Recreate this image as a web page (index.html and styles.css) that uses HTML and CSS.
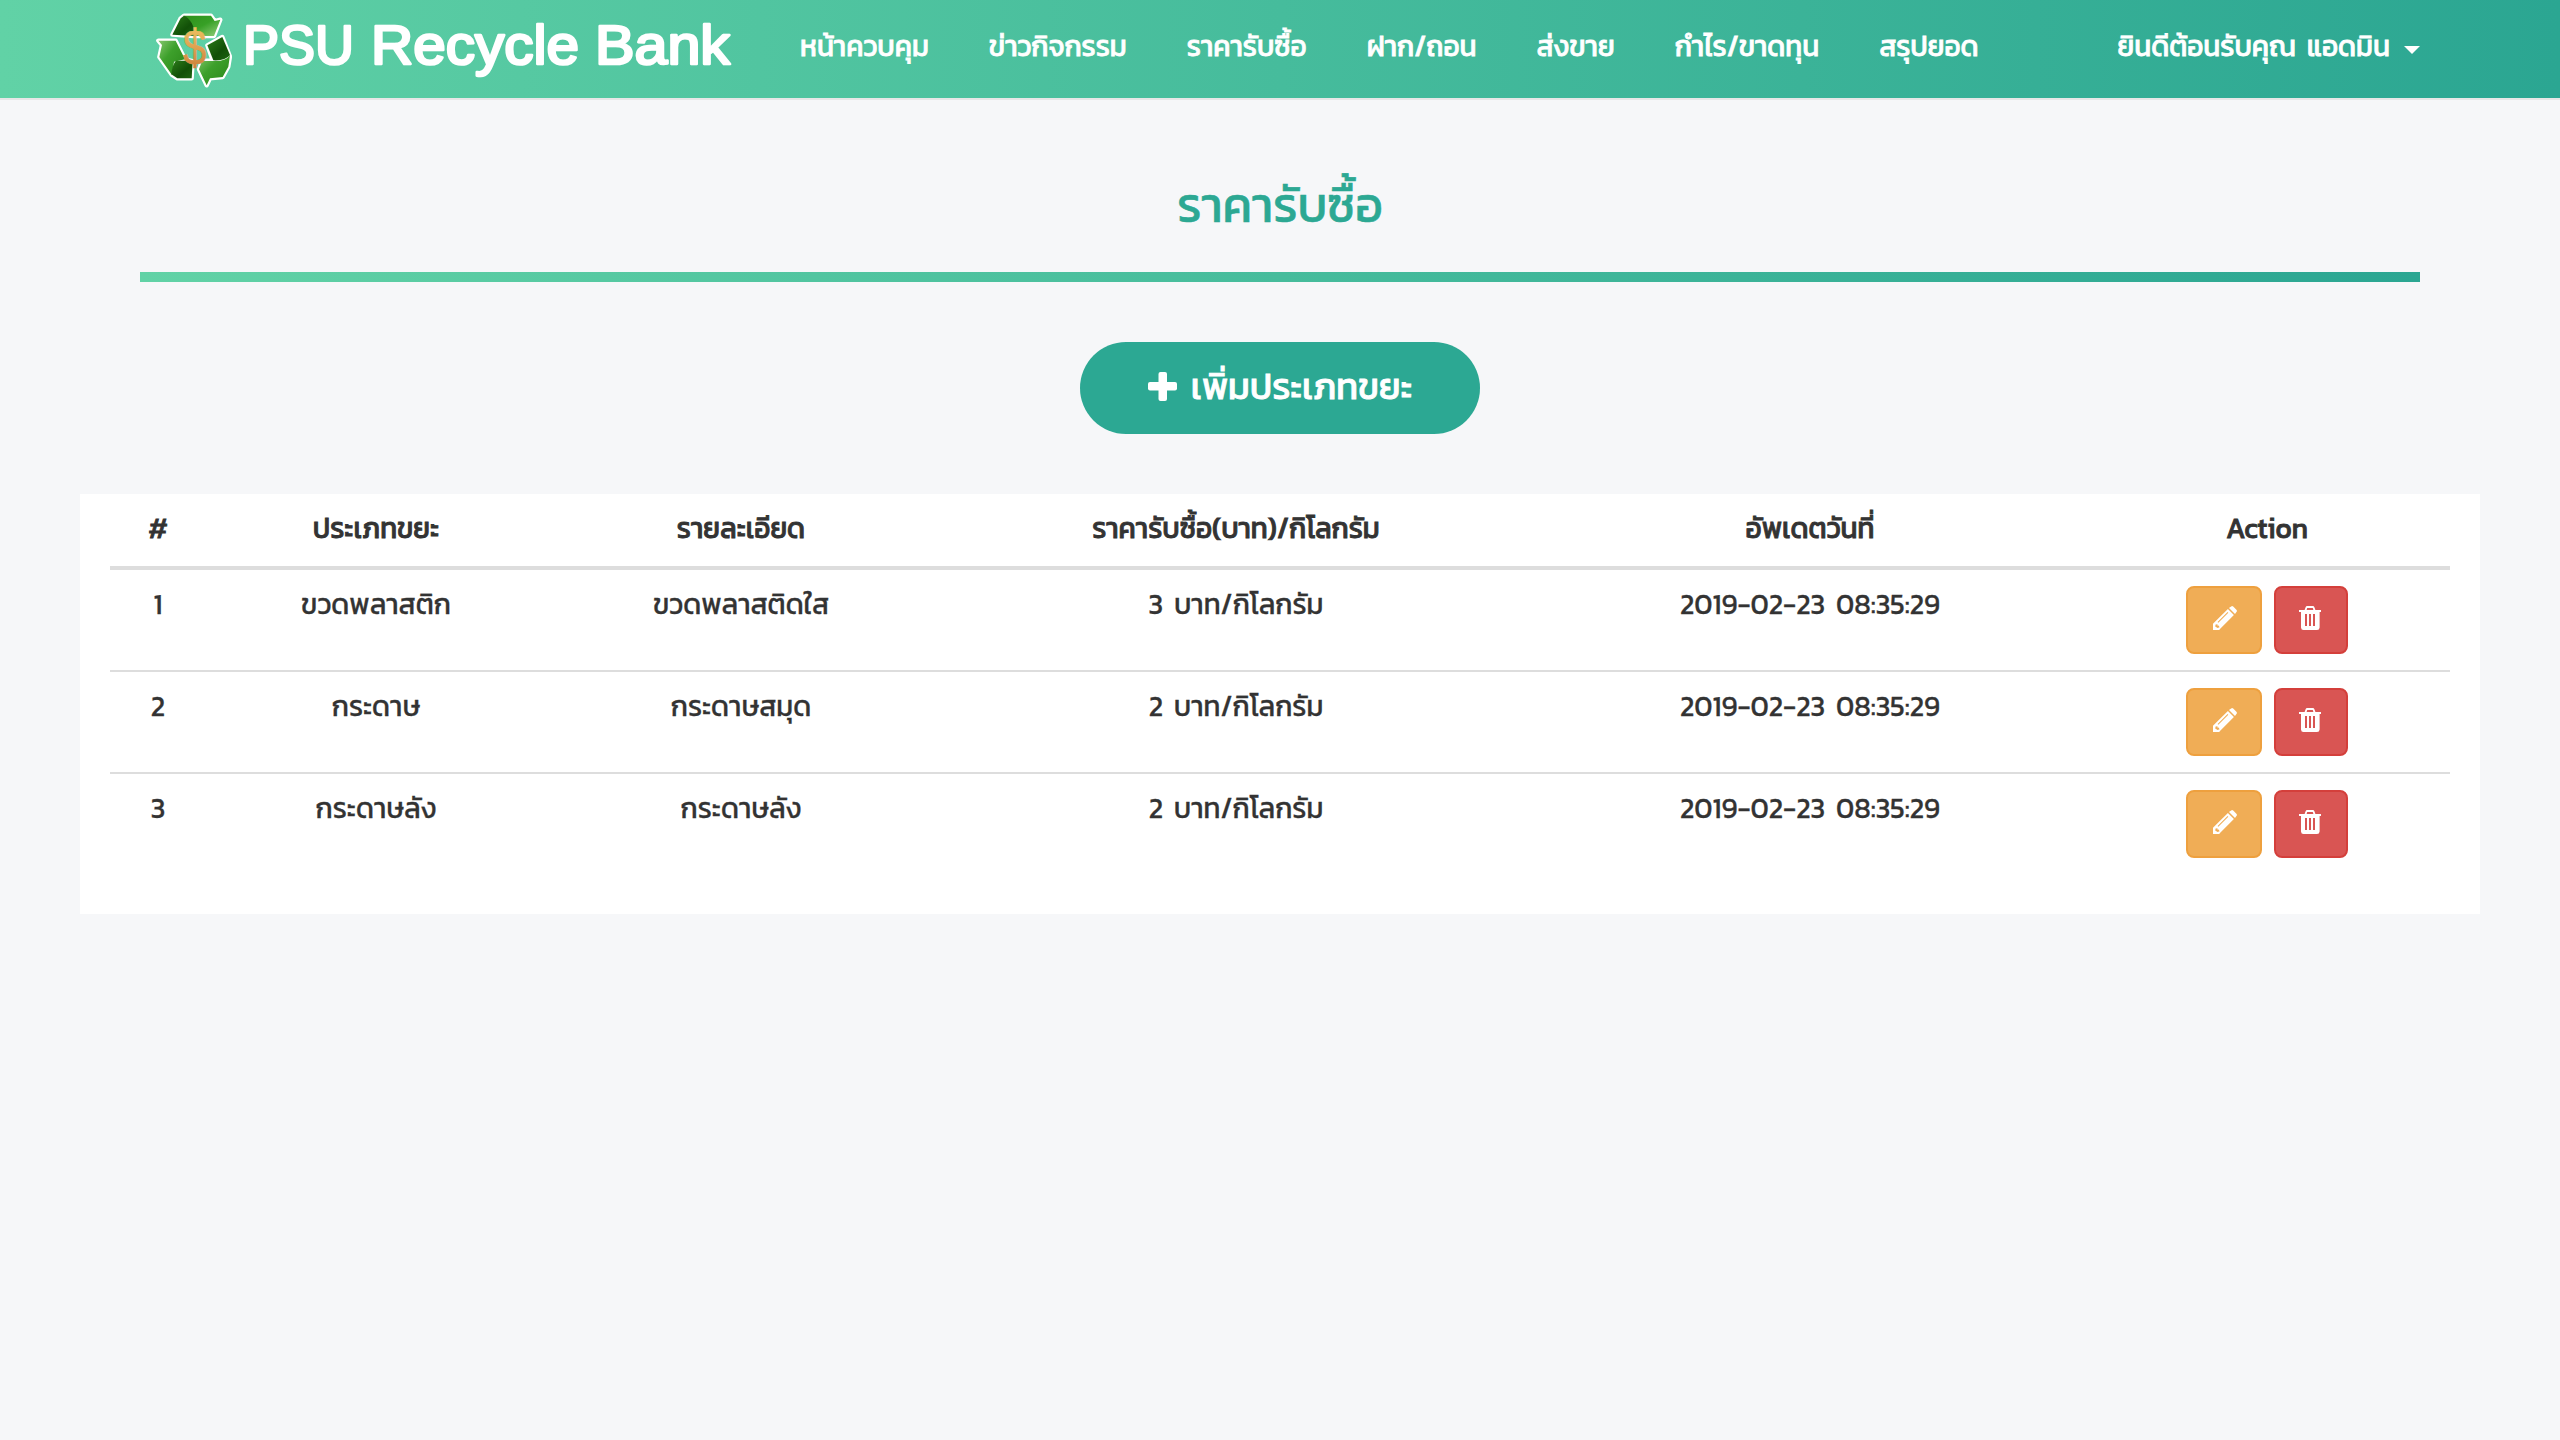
FILE: index.html
```html
<!DOCTYPE html>
<html lang="th">
<head>
<meta charset="utf-8">
<title>PSU Recycle Bank</title>
<link rel="stylesheet" href="styles.css">
</head>
<body>
<svg class="defs" aria-hidden="true">
  <symbol id="pencil" viewBox="0 0 24 24">
    <path fill="currentColor" fill-rule="evenodd" d="M17 1.2 18.2.4Q19.2-.3 20.2.6L23.4 3.8Q24.3 4.8 23.6 5.8L22 8 16 2ZM14.9 3 20.9 9 7.2 22.7 6.2 24H0V17.7L1 16.8ZM14.6 6 4.6 16 5.3 16.7 15.3 6.7ZM2.6 18.6 2.2 20.6 4.6 22 6.6 21.2 5.6 19.4 4.4 19.6 4.5 18.2Z"/>
  </symbol>
  <symbol id="trash" viewBox="0 0 22 24">
    <path fill="currentColor" fill-rule="evenodd" d="M0 4H5.6L6.6 1.2Q7 0 8.2 0H13.8Q15 0 15.4 1.2L16.4 4H22V6H20.6V21.5Q20.4 24 18 24H4.4Q2.2 24 2 21.5V6H0ZM7.6 4H14.4L13.8 2H8.2ZM6 8V20H8V8ZM10 8V20H12V8ZM14 8V20H16V8Z"/>
  </symbol>
</svg>

<header class="navbar">
  <a class="brand" href="#">
    <svg class="brand-icon" viewBox="18 21 228 228">
      <defs>
        <linearGradient id="leaf" x1="0" y1="0" x2="1" y2="1"><stop offset="0" stop-color="#2f8f1c"/><stop offset=".5" stop-color="#37a026"/><stop offset="1" stop-color="#93cf7c"/></linearGradient>
        <linearGradient id="leafDown" x1="1" y1="1" x2="0" y2="0"><stop offset="0" stop-color="#2a8519"/><stop offset=".6" stop-color="#3da02b"/><stop offset="1" stop-color="#84c66b"/></linearGradient>
        <linearGradient id="dark" x1="0" y1="0" x2="1" y2="1"><stop offset="0" stop-color="#2d7d1a"/><stop offset=".6" stop-color="#125008"/><stop offset="1" stop-color="#1d6410"/></linearGradient>
        <linearGradient id="gold" x1="0" y1="0" x2="0" y2="1"><stop offset="0" stop-color="#f3cc66"/><stop offset=".5" stop-color="#dfa050"/><stop offset="1" stop-color="#c47432"/></linearGradient>
      </defs>
      <g class="brand-edge">
        <path d="M67 89 92 40 102 32H183L194 48 211 44 192 93H130Z"/>
        <path d="M25 107H77L105 163 128 168 125 220H82L66 210 28 156 36 120Z"/>
        <path d="M172 121 217 96 240 155 235 185 218 216 180 220 170 241 147 193 156 168 188 166Z"/>
      </g>
      <path fill="url(#leaf)" d="M100 32H183L194 48 211 44 192 93H132Z"/>
      <path fill="url(#dark)" d="M67 89 92 40 102 32Q128 42 138 93Z"/>
      <path fill="url(#leafDown)" d="M25 107H77L105 163 72 170 66 210 28 156 36 120Z"/>
      <path fill="url(#dark)" d="M78 167H128L125 220H82L64 208Q66 180 78 167Z"/>
      <path fill="url(#leafDown)" d="M240 150 235 185 218 216 180 220 170 241 147 193 156 168H190Q228 170 240 150Z"/>
      <path fill="url(#dark)" d="M172 121 217 96 240 150Q226 168 190 166Z"/>
      <text class="brand-dollar" x="134" y="180" textLength="70" lengthAdjust="spacingAndGlyphs">$</text>
    </svg>
    <svg class="brand-name" viewBox="0 0 490 98">
      <text x="-3" y="64" textLength="111" lengthAdjust="spacingAndGlyphs">PSU</text>
      <text x="125" y="64" textLength="208" lengthAdjust="spacingAndGlyphs">Recycle</text>
      <text x="349" y="64" textLength="135" lengthAdjust="spacingAndGlyphs">Bank</text>
    </svg>
  </a>
  <nav class="menu">
    <a href="#">หน้าควบคุม</a>
    <a href="#">ข่าวกิจกรรม</a>
    <a href="#">ราคารับซื้อ</a>
    <a href="#">ฝาก/ถอน</a>
    <a href="#">ส่งขาย</a>
    <a href="#">กำไร/ขาดทุน</a>
    <a href="#">สรุปยอด</a>
  </nav>
  <a class="user" href="#">ยินดีต้อนรับคุณ แอดมิน<span class="caret"></span></a>
</header>

<main>
  <h1 class="title">ราคารับซื้อ</h1>
  <div class="rule"></div>
  <a class="add" href="#"><svg class="plus" viewBox="0 0 29 29"><rect y="10" width="29" height="8.5" rx="2"/><rect x="10.5" width="8.5" height="29" rx="2"/></svg>เพิ่มประเภทขยะ</a>

  <section class="panel">
    <table class="prices">
      <colgroup><col class="c-no"><col class="c-type"><col class="c-detail"><col class="c-price"><col class="c-date"><col class="c-action"></colgroup>
      <thead>
        <tr><th>#</th><th>ประเภทขยะ</th><th>รายละเอียด</th><th>ราคารับซื้อ(บาท)/กิโลกรัม</th><th>อัพเดตวันที่</th><th>Action</th></tr>
      </thead>
      <tbody>
        <tr><td>1</td><td>ขวดพลาสติก</td><td>ขวดพลาสติดใส</td><td>3 บาท/กิโลกรัม</td><td>2019-02-23 08:35:29</td>
          <td><div class="actions"><a class="btn edit" href="#"><svg><use href="#pencil"/></svg></a><a class="btn delete" href="#"><svg><use href="#trash"/></svg></a></div></td></tr>
        <tr><td>2</td><td>กระดาษ</td><td>กระดาษสมุด</td><td>2 บาท/กิโลกรัม</td><td>2019-02-23 08:35:29</td>
          <td><div class="actions"><a class="btn edit" href="#"><svg><use href="#pencil"/></svg></a><a class="btn delete" href="#"><svg><use href="#trash"/></svg></a></div></td></tr>
        <tr><td>3</td><td>กระดาษลัง</td><td>กระดาษลัง</td><td>2 บาท/กิโลกรัม</td><td>2019-02-23 08:35:29</td>
          <td><div class="actions"><a class="btn edit" href="#"><svg><use href="#pencil"/></svg></a><a class="btn delete" href="#"><svg><use href="#trash"/></svg></a></div></td></tr>
      </tbody>
    </table>
  </section>
</main>
</body>
</html>
```
FILE: styles.css
```css
* { box-sizing: border-box; }

body {
  margin: 0;
  min-height: 1440px;
  background: #f6f7f9;
  color: #333;
  font: 400 28px/40px Kanit, "Noto Sans Thai", "Noto Sans", sans-serif;
  word-spacing: 4.5px;
  -webkit-text-stroke: 0.3px;
}

a { color: inherit; text-decoration: none; }

.defs { display: none; }

/* Top bar */
.navbar {
  display: flex;
  height: 100px;
  padding: 0 140px 0 156px;
  border-bottom: 2px solid #e7e7e7;
  background: linear-gradient(90deg, #61d2a6, #2ba692) padding-box;
  color: #fff;
  -webkit-text-stroke: 0.8px;
}

.brand { display: flex; width: 644px; }
.brand-icon { width: 76px; height: 76px; margin: 12px 14px 0 0; }
.brand-edge { fill: #fff; stroke: #fff; stroke-width: 13; stroke-linejoin: round; }
.brand-dollar { font: 150px "Liberation Sans", Arial, sans-serif; text-anchor: middle; fill: url(#gold); stroke: url(#gold); stroke-width: 2; }
.brand-name {
  width: 490px;
  height: 98px;
  overflow: visible;
  font: 55px "Liberation Sans", Arial, sans-serif;
  word-spacing: 0;
  fill: #fff;
  stroke: #fff;
  stroke-width: 2.6px;
  stroke-linejoin: round;
}

.menu { display: flex; gap: 60px; padding-top: 26px; }
.user { display: flex; margin-left: auto; padding-top: 26px; }
.caret {
  margin: 20px 0 0 14px;
  align-self: flex-start;
  border: 8px solid transparent;
  border-top-color: #fff;
  border-bottom: 0;
}

/* Page heading */
main { display: flex; flex-direction: column; align-items: center; }
.title { margin: 70px 0 0; height: 102px; color: #2ca893; font-size: 48px; font-weight: 400; line-height: 70px; -webkit-text-stroke: 0.6px; }
.rule { width: 2280px; height: 10px; background: linear-gradient(90deg, #61d2a6, #2ba692); }

.add {
  display: flex;
  align-items: center;
  justify-content: center;
  gap: 14px;
  width: 400px;
  height: 92px;
  margin: 60px 0;
  padding-bottom: 4px;
  border-radius: 46px;
  background: #2ca893;
  color: #fff;
  font-size: 36px;
  -webkit-text-stroke: 0.9px;
}
.plus { width: 29px; height: 29px; fill: #fff; }

/* Price table */
.panel { width: 2400px; height: 420px; padding: 0 30px; background: #fff; }
.prices { width: 2340px; table-layout: fixed; border-collapse: separate; border-spacing: 0; text-align: center; }
.c-no { width: 96px; }
.c-type { width: 340px; }
.c-detail { width: 390px; }
.c-price { width: 600px; }
.c-date { width: 548px; }
.c-action { width: 366px; }

th { padding: 14px 0 18px; border-bottom: 4px solid #ddd; font-weight: 400; -webkit-text-stroke: 0.9px; }
td { height: 100px; padding: 14px 0 0; vertical-align: top; }
tbody tr + tr td { height: 102px; border-top: 2px solid #ddd; }

.actions { display: flex; justify-content: center; gap: 12px; padding-top: 2px; }
.btn { display: flex; height: 68px; border: 2px solid; border-radius: 8px; padding-top: 18px; justify-content: center; }
.btn svg { height: 24px; color: #fff; }
.edit { width: 76px; padding-left: 1px; background: #f0ad56; border-color: #eea03e; }
.edit svg { width: 24px; }
.delete { width: 74px; padding-right: 2px; background: #d95553; border-color: #d43f3b; }
.delete svg { width: 22px; }
```
